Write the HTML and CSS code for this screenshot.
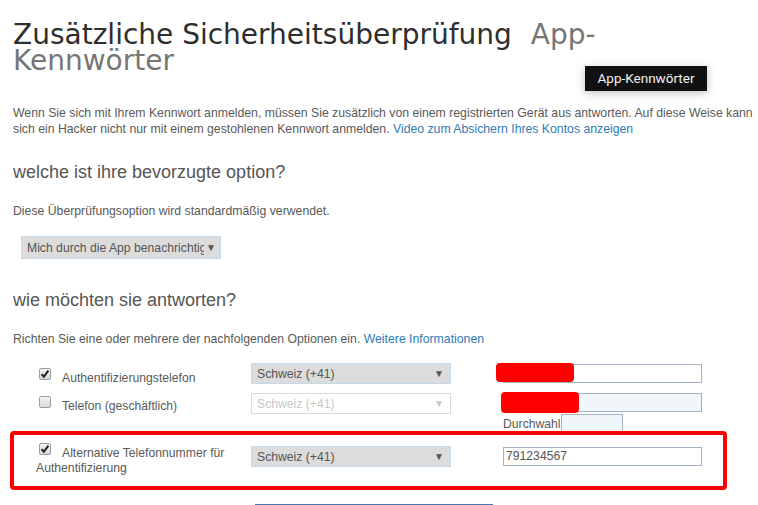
FILE: index.html
```html
<!DOCTYPE html>
<html lang="de">
<head>
<meta charset="utf-8">
<title>Zusätzliche Sicherheitsüberprüfung</title>
<link rel="stylesheet" href="styles.css">
</head>
<body>
<div class="page">
  <h1 class="title">Zusätzliche Sicherheitsüberprüfung <span class="title-sub">App-Kennwörter</span></h1>
  <div class="tooltip">App-Kennwörter</div>
  <p class="text intro">Wenn Sie sich mit Ihrem Kennwort anmelden, müssen Sie zusätzlich von einem registrierten Gerät aus antworten. Auf diese Weise kann sich ein Hacker nicht nur mit einem gestohlenen Kennwort anmelden. <a class="link" href="#">Video zum Absichern Ihres Kontos anzeigen</a></p>

  <h2 class="heading h-first">welche ist ihre bevorzugte option?</h2>
  <p class="text t-after">Diese Überprüfungsoption wird standardmäßig verwendet.</p>
  <div class="select pref"><span class="sel-text">Mich durch die App benachrichtigen</span><span class="arrow">▼</span></div>

  <h2 class="heading h-second">wie möchten sie antworten?</h2>
  <p class="text t-after">Richten Sie eine oder mehrere der nachfolgenden Optionen ein. <a class="link" href="#">Weitere Informationen</a></p>

  <div class="options">
    <div class="row row1">
      <div class="label"><span class="cb checked"><svg viewBox="0 0 12 12" width="12" height="12"><path d="M2.6 6.2 L4.9 8.6 L9.4 2.6" fill="none" stroke="#222" stroke-width="2"/></svg></span>Authentifizierungstelefon</div>
      <div class="select"><span class="sel-text">Schweiz (+41)</span><span class="arrow">▼</span></div>
      <div class="field"><div class="input"></div><span class="redact r1"></span></div>
    </div>
    <div class="row row2">
      <div class="label"><span class="cb"></span>Telefon (geschäftlich)</div>
      <div class="select disabled"><span class="sel-text">Schweiz (+41)</span><span class="arrow">▼</span></div>
      <div class="field"><div class="input tinted"></div><span class="redact r2"></span></div>
    </div>
    <div class="row row-ext">
      <div class="ext"><span class="ext-label">Durchwahl</span><div class="input tinted small"></div></div>
    </div>
    <div class="row row3 highlight">
      <div class="label"><span class="cb checked"><svg viewBox="0 0 12 12" width="12" height="12"><path d="M2.6 6.2 L4.9 8.6 L9.4 2.6" fill="none" stroke="#222" stroke-width="2"/></svg></span>Alternative Telefonnummer für Authentifizierung</div>
      <div class="select"><span class="sel-text">Schweiz (+41)</span><span class="arrow">▼</span></div>
      <div class="field"><div class="input">791234567</div></div>
    </div>
  </div>
  <div class="bottom-line"></div>
</div>
</body>
</html>
```
FILE: styles.css
```css
html, body {
  margin: 0;
  padding: 0;
  background: #ffffff;
  overflow: hidden;
}
body {
  font-family: "Liberation Sans", Arial, sans-serif;
  color: #595959;
}
.page {
  position: relative;
  padding: 0 3px 0 13px;
  height: 505px;
  box-sizing: border-box;
}
.title {
  margin: 0;
  padding-top: 22px;
  padding-right: 10px;
  font-family: "DejaVu Sans", Verdana, sans-serif;
  font-weight: normal;
  font-size: 28px;
  line-height: 26px;
  color: #2e2e2e;
}
.title-sub {
  margin-left: 10px;
  color: #767676;
}
.tooltip {
  position: absolute;
  left: 585px;
  top: 66px;
  width: 122px;
  height: 25px;
  box-sizing: border-box;
  background: #111111;
  color: #f2f2f2;
  font-family: Roboto, "Noto Sans", sans-serif;
  font-size: 13.5px;
  line-height: 25px;
  text-align: center;
  box-shadow: 0 2px 10px rgba(0,0,0,0.25);
}
.text {
  margin: 0;
  font-size: 12.25px;
  line-height: 16px;
  color: #595959;
}
.intro {
  margin-top: 31px;
}
.link {
  color: #2f7bb5;
  text-decoration: none;
}
.heading {
  margin: 0;
  font-weight: normal;
  font-size: 18px;
  line-height: 22px;
  color: #555555;
}
.h-first { margin-top: 24px; }
.h-second { margin-top: 30px; }
.t-after { margin-top: 20px; }

.select {
  display: flex;
  align-items: center;
  box-sizing: border-box;
  width: 200px;
  height: 21px;
  padding: 0 6px 0 5px;
  background: #dcdcdc;
  border: 1px solid #c4daec;
  font-size: 12.2px;
  color: #555555;
  overflow: hidden;
  white-space: nowrap;
}
.sel-text {
  overflow: hidden;
  flex: 1;
  min-width: 0;
}
.arrow {
  flex: none;
  font-size: 10px;
  color: #555555;
  margin-left: 2px;
}
.pref {
  margin: 17px 0 0 8px;
  height: 23px;
  padding: 0 4px 0 5px;
}
.select.disabled {
  background: #ffffff;
  border-color: #d3dde6;
  color: #c8c8c8;
}
.select.disabled .arrow { color: #c8c8c8; }

.options {
  margin: 16px 0 0 -3px;
}
.row {
  display: grid;
  grid-template-columns: 215px 200px 52px 199px;
  align-items: start;
  padding-left: 26px;
}
.row .select { grid-column: 2; }
.row .field { grid-column: 4; position: relative; }
.row2 { margin-top: 7px; }
.row-ext { margin-top: 0; }
.ext {
  grid-column: 4;
  display: flex;
  align-items: flex-end;
  height: 17px;
}
.ext-label {
  font-size: 12.2px;
  color: #595959;
  line-height: 14px;
}
.label {
  font-size: 12.2px;
  line-height: 15px;
  color: #595959;
  padding-top: 5px;
}
.row2 .label { padding-top: 3px; }
.cb {
  display: inline-block;
  width: 12px;
  height: 12px;
  box-sizing: border-box;
  margin: 0 11px 2px 3px;
  border: 1px solid #9c9c9c;
  border-radius: 2px;
  background: linear-gradient(#f4f4f4, #d9d9d9);
  vertical-align: baseline;
  position: relative;
}
.cb svg {
  position: absolute;
  left: -1px;
  top: -1px;
}
.input {
  box-sizing: border-box;
  width: 199px;
  height: 19px;
  border: 1px solid #a3b3c3;
  background: #ffffff;
  font-size: 12.2px;
  line-height: 17px;
  padding-left: 2px;
  color: #555555;
}
.row1 .input { margin-top: 1px; }
.input.tinted { background: #f1f6fb; }
.input.small {
  width: 62px;
  height: 19px;
  margin-bottom: -2px;
  flex: none;
}
.redact {
  position: absolute;
  background: #ff0000;
  border-radius: 4px;
}
.redact.r1 { left: -7px; top: 0; width: 78px; height: 19px; }
.redact.r2 { left: -2px; top: -1px; width: 78px; height: 21px; }

.highlight {
  position: relative;
  z-index: 1;
  width: 717px;
  box-sizing: border-box;
  margin-top: 0;
  border: 4px solid #ff0000;
  border-radius: 4px;
  padding: 8px 0 10px 22px;
}
.row3 .label { padding-top: 0; }
.row3 .cb { margin-bottom: 2px; }
.row3 .select { margin-top: 3px; }
.row3 .input { margin-top: 4px; }

.bottom-line {
  margin: 14px 0 0 242px;
  width: 238px;
  height: 1px;
  background: #4a78aa;
}
```
